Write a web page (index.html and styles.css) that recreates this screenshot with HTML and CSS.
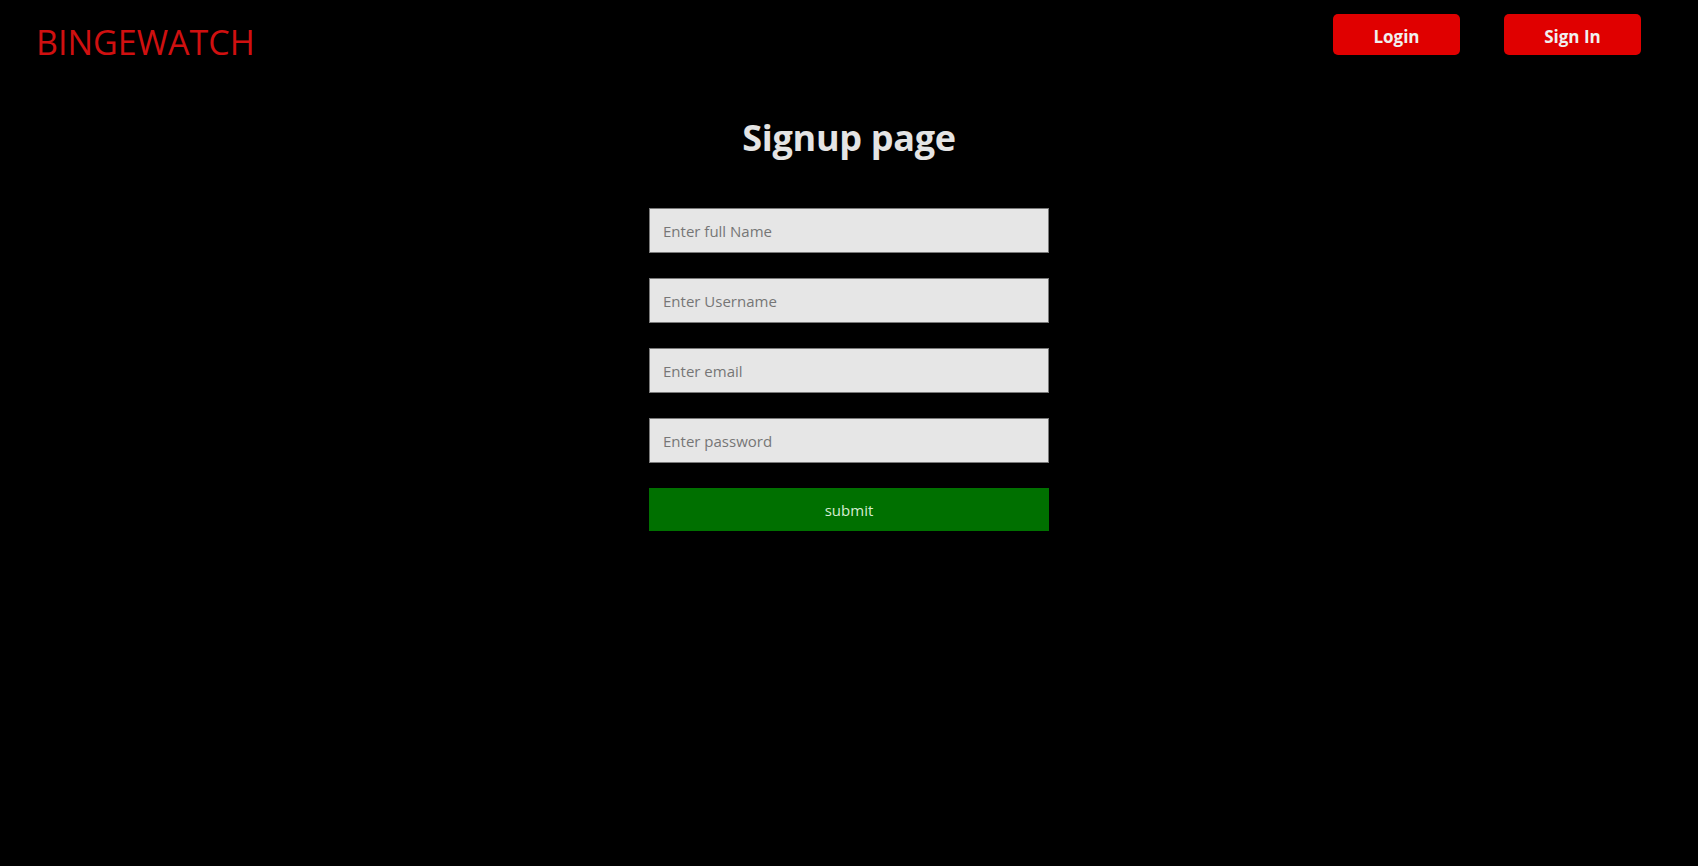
FILE: index.html
```html
<!DOCTYPE html>
<html lang="en">
<head>
<meta charset="utf-8">
<title>BINGEWATCH - Signup</title>
<link rel="stylesheet" href="styles.css">
</head>
<body>
<header class="topbar">
  <div class="logo">BINGEWATCH</div>
  <nav class="nav">
    <button class="nav-btn btn-login">Login</button>
    <button class="nav-btn btn-signin">Sign In</button>
  </nav>
</header>
<main class="main">
  <h1 class="title">Signup page</h1>
  <form class="form">
    <input class="field" type="text" placeholder="Enter full Name">
    <input class="field" type="text" placeholder="Enter Username">
    <input class="field" type="email" placeholder="Enter email">
    <input class="field" type="password" placeholder="Enter password">
    <button class="submit" type="button">submit</button>
  </form>
</main>
</body>
</html>
```

FILE: styles.css
```css
html, body {
  margin: 0;
  padding: 0;
  background: #000;
  height: 100%;
}
body {
  font-family: "Open Sans", "Noto Sans", "Liberation Sans", sans-serif;
  color: #e6e6e6;
}
.topbar {
  display: flex;
  justify-content: space-between;
  align-items: flex-start;
  padding: 14px 57px 0 36px;
}
.logo {
  color: #d01010;
  font-size: 34px;
  line-height: 40px;
  margin-top: 8px;
  letter-spacing: 0;
}
.nav {
  display: flex;
  gap: 44px;
}
.nav-btn {
  height: 41px;
  border: none;
  border-radius: 5px;
  background: #e00000;
  color: #f0f0f0;
  font-family: inherit;
  font-weight: 700;
  font-size: 17px;
  padding: 3px 0 0;
  cursor: pointer;
}
.btn-login { width: 127px; }
.btn-signin { width: 137px; }
.main {
  display: flex;
  flex-direction: column;
  align-items: center;
}
.title {
  margin: 54px 0 0;
  font-size: 36px;
  line-height: 44px;
  font-weight: 700;
  color: #e4e4e4;
  letter-spacing: -0.3px;
}
.form {
  margin-top: 48px;
  width: 400px;
  display: flex;
  flex-direction: column;
  gap: 25px;
}
.field {
  box-sizing: border-box;
  height: 45px;
  width: 100%;
  margin: 0;
  border: 1px solid #7a7a7a;
  background: #e6e6e6;
  padding: 0 13px;
  font-family: inherit;
  font-size: 15px;
  color: #333;
  outline: none;
}
.field::placeholder {
  color: #767676;
}
.submit {
  height: 43px;
  width: 100%;
  border: none;
  background: #007000;
  color: #d6ecd2;
  font-family: inherit;
  font-size: 15px;
  cursor: pointer;
}
```
